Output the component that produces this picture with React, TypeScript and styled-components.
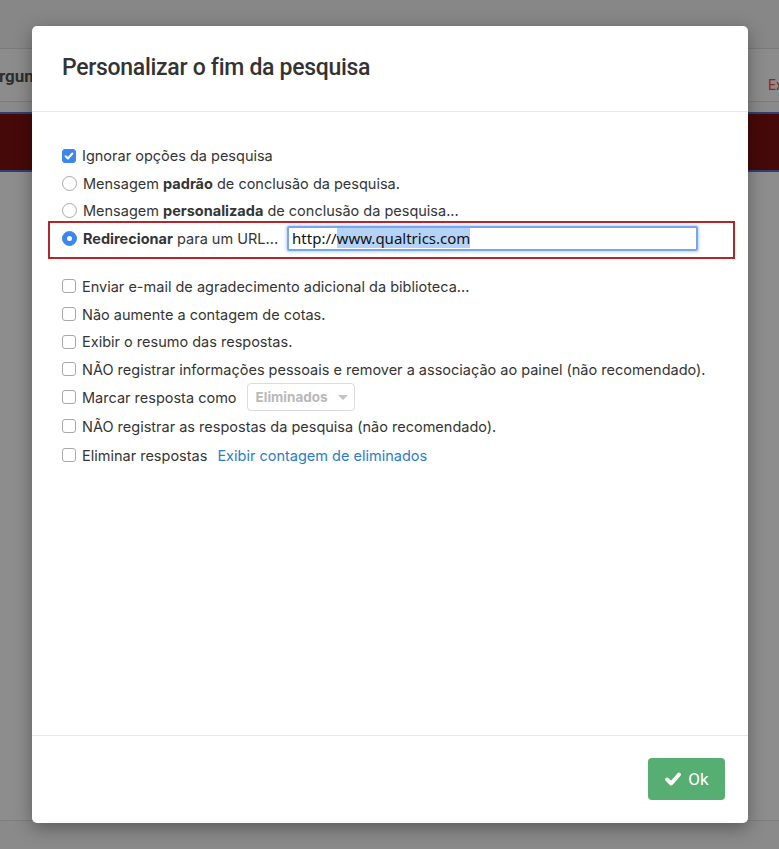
import React from "react";
import styled, { createGlobalStyle } from "styled-components";

const Global = createGlobalStyle`
  html, body { margin: 0; padding: 0; }
  body {
    background: #8a8a8a;
    font-family: Inter, Roboto, "Noto Sans", "Liberation Sans", sans-serif;
    width: 779px;
    height: 849px;
    overflow: hidden;
  }
`;

const Page = styled.div`
  position: relative;
  width: 779px;
  height: 849px;
  display: flex;
  flex-direction: column;
  background: #8a8a8a;
`;

const TopBand = styled.div`
  height: 48px;
  background: #878787;
  border-bottom: 1px solid #7b7b7b;
`;

const NavBand = styled.div`
  height: 52px;
  background: #8c8c8c;
  border-bottom: 1px solid #7c7c7c;
  display: flex;
  align-items: center;
  justify-content: space-between;
  font-family: Roboto, sans-serif;
`;

const NavLeft = styled.span`
  font-weight: 700;
  font-size: 17px;
  color: #2e2e2e;
  margin-left: -21px;
  padding-top: 1px;
`;

const NavRight = styled.span`
  color: #8c2a1a;
  margin-right: -4px;
  font-size: 14px;
  padding-top: 20px;
`;

const RedBar = styled.div`
  margin-top: 10px;
  height: 56px;
  background: #460909;
  border-top: 2px solid #2e3f72;
  border-bottom: 2px solid #2e3f72;
`;

const Filler = styled.div`
  flex: 1;
  border-bottom: 1px solid #7e7e7e;
  max-height: 648px;
  background: #8d8d8d;
`;

const Modal = styled.div`
  position: absolute;
  left: 32px;
  top: 26px;
  width: 716px;
  height: 797px;
  background: #fff;
  border-radius: 5px;
  box-shadow: 0 5px 18px rgba(0, 0, 0, 0.35);
  display: flex;
  flex-direction: column;
  color: #353535;
`;

const Header = styled.div`
  height: 86px;
  border-bottom: 1px solid #e8e8e8;
  display: flex;
  align-items: center;
  padding: 0 30px;
  box-sizing: border-box;
`;

const Title = styled.h1`
  margin: 0;
  font-family: Roboto, sans-serif;
  font-size: 23px;
  font-weight: 500;
  color: #333;
  letter-spacing: -0.3px;
  padding-bottom: 2px;
`;

const Body = styled.div`
  flex: 1;
  padding: 30px 30px 0 30px;
  display: flex;
  flex-direction: column;
`;

const Group = styled.div<{ $gap?: number }>`
  display: flex;
  flex-direction: column;
  margin-top: ${(p) => p.$gap ?? 0}px;
`;

const Row = styled.label<{ $h?: number }>`
  position: relative;
  display: flex;
  align-items: center;
  height: ${(p) => p.$h ?? 27.5}px;
  font-size: 14.5px;
  color: #353535;
  gap: 6px;
`;

const Highlight = styled.div`
  position: absolute;
  left: -14px;
  right: -17px;
  top: -4px;
  bottom: -7px;
  border: 2px solid #b3262c;
  pointer-events: none;
`;

const Box = styled.span<{ $checked?: boolean }>`
  width: 14px;
  height: 14px;
  box-sizing: border-box;
  border-radius: 3px;
  border: 1px solid ${(p) => (p.$checked ? "#3d86ee" : "#a9a9a9")};
  background: ${(p) => (p.$checked ? "#3d86ee" : "#fff")};
  display: inline-flex;
  align-items: center;
  justify-content: center;
  flex-shrink: 0;
`;

const Radio = styled.span<{ $checked?: boolean }>`
  width: 15px;
  height: 15px;
  box-sizing: border-box;
  border-radius: 50%;
  border: 1px solid ${(p) => (p.$checked ? "#3d86ee" : "#a9a9a9")};
  background: ${(p) => (p.$checked ? "#3d86ee" : "#fff")};
  display: inline-flex;
  align-items: center;
  justify-content: center;
  flex-shrink: 0;
  &::after {
    content: "";
    display: ${(p) => (p.$checked ? "block" : "none")};
    width: 5px;
    height: 5px;
    border-radius: 50%;
    background: #fff;
  }
`;

const Strong = styled.b`
  font-weight: 700;
`;

const UrlInput = styled.div`
  margin-left: 3px;
  width: 411px;
  height: 25px;
  box-sizing: border-box;
  border: 2px solid #7aa7ea;
  box-shadow: 0 0 3px 1px rgba(90, 150, 240, 0.45);
  border-radius: 2px;
  display: flex;
  align-items: center;
  padding-left: 3px;
  font-size: 15px;
  color: #111;
  font-family: "Noto Sans", Roboto, sans-serif;
`;

const Selected = styled.span`
  background: #b5d3f7;
`;

const Select = styled.div`
  margin-left: 4px;
  width: 108px;
  height: 28px;
  box-sizing: border-box;
  border: 1px solid #dcdcdc;
  border-radius: 4px;
  display: flex;
  align-items: center;
  padding: 0 8px;
  gap: 10px;
  color: #b9b9b9;
  font-weight: 700;
  font-size: 13.5px;
`;

const Caret = styled.span`
  width: 0;
  height: 0;
  border-left: 5px solid transparent;
  border-right: 5px solid transparent;
  border-top: 5px solid #c4c4c4;
`;

const Link = styled.a`
  color: #2b7ccc;
  text-decoration: none;
  margin-left: 4px;
`;

const Footer = styled.div`
  height: 88px;
  border-top: 1px solid #e8e8e8;
  display: flex;
  align-items: flex-start;
  justify-content: flex-end;
  padding: 22px 23px 0 0;
  box-sizing: border-box;
`;

const OkButton = styled.button`
  width: 77px;
  height: 42px;
  border: none;
  border-radius: 4px;
  background: #57ae72;
  color: #fff;
  font-family: Roboto, sans-serif;
  font-size: 17px;
  display: flex;
  align-items: center;
  justify-content: center;
  gap: 6px;
  padding: 0;
`;

const Check = ({ size = 10, w = 2.4 }: { size?: number; w?: number }) => (
  <svg width={size} height={size} viewBox="0 0 12 12">
    <path d="M2 6.3 L4.8 9 L10 3" fill="none" stroke="#fff" strokeWidth={w} strokeLinecap="round" strokeLinejoin="round" />
  </svg>
);

const lowerItems: React.ReactNode[] = [
  "Enviar e-mail de agradecimento adicional da biblioteca...",
  "Não aumente a contagem de cotas.",
  "Exibir o resumo das respostas.",
  "NÃO registrar informações pessoais e remover a associação ao painel (não recomendado).",
];

export default function App() {
  return (
    <>
      <Global />
      <Page>
        <TopBand />
        <NavBand>
          <NavLeft>Perguntas</NavLeft>
          <NavRight>Ex</NavRight>
        </NavBand>
        <RedBar />
        <Filler />
        <Modal>
          <Header>
            <Title>Personalizar o fim da pesquisa</Title>
          </Header>
          <Body>
            <Group>
              <Row>
                <Box $checked>
                  <Check />
                </Box>
                Ignorar opções da pesquisa
              </Row>
              <Row>
                <Radio />
                <span>
                  Mensagem <Strong>padrão</Strong> de conclusão da pesquisa.
                </span>
              </Row>
              <Row>
                <Radio />
                <span>
                  Mensagem <Strong>personalizada</Strong> de conclusão da pesquisa...
                </span>
              </Row>
              <Row>
                <Highlight />
                <Radio $checked />
                <span>
                  <Strong>Redirecionar</Strong> para um URL...
                </span>
                <UrlInput>
                  http://<Selected>www.qualtrics.com</Selected>
                </UrlInput>
              </Row>
            </Group>
            <Group $gap={20.5}>
              {lowerItems.map((t, i) => (
                <Row key={i} $h={27.7}>
                  <Box />
                  {t}
                </Row>
              ))}
              <Row $h={28}>
                <Box />
                Marcar resposta como
                <Select>
                  Eliminados <Caret />
                </Select>
              </Row>
              <Row $h={30}>
                <Box />
                NÃO registrar as respostas da pesquisa (não recomendado).
              </Row>
              <Row $h={28}>
                <Box />
                Eliminar respostas
                <Link>Exibir contagem de eliminados</Link>
              </Row>
            </Group>
          </Body>
          <Footer>
            <OkButton>
              <Check size={18} w={2.6} />
              Ok
            </OkButton>
          </Footer>
        </Modal>
      </Page>
    </>
  );
}
